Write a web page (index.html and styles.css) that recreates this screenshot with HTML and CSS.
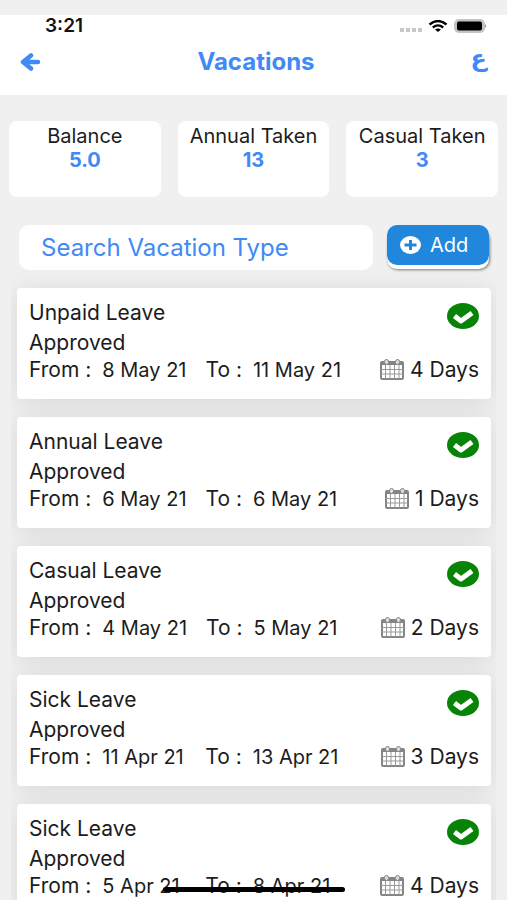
FILE: index.html
```html
<!DOCTYPE html>
<html lang="en">
  <head>
    <meta charset="UTF-8" />
    <meta name="viewport" content="width=device-width, initial-scale=1.0" />
    <title>Vacations</title>
    <link rel="stylesheet" href="styles.css">
  </head>
  <body>
    <!-- shared icons -->
    <svg class="sprite" aria-hidden="true">
      <symbol id="check" viewBox="0 0 32 26" preserveAspectRatio="none">
        <ellipse cx="16" cy="13" rx="16" ry="13" fill="#078307" />
        <path d="M7.500 13L14 18L25 10" fill="none" stroke="#fff" stroke-width="5" stroke-linejoin="round" />
      </symbol>
      <symbol id="calendar" viewBox="0 0 24 22">
        <rect x="1" y="3" width="22" height="17" rx="1" fill="#fff" stroke="#858585" stroke-width="2" />
        <path d="M1 2.500h22V6H1z" fill="#858585" />
        <path d="M1 10.500h22M1 15h22M5.500 6v14M10 6v14M14.500 6v14M19 6v14" stroke="#999" stroke-width="1" />
        <rect x="4.500" y="0.500" width="4" height="5" rx="2" fill="#ddd" stroke="#858585" />
        <rect x="15.500" y="0.500" width="4" height="5" rx="2" fill="#ddd" stroke="#858585" />
      </symbol>
    </svg>

    <div class="app">
      <header class="header">
        <div class="status">
          <span class="time">3:21</span>
          <svg class="signal" viewBox="0 0 24 4" width="24" height="4"><path d="M0 0h4v4H0zM6 0h4v4H6zM12 0h4v4h-4zM18 0h4v4h-4z" fill="#c8c8c8" /></svg>
          <svg class="wifi" viewBox="0 0 20 12" width="20" height="12">
            <path d="M1.500 4.500Q10 -2.500 18.500 4.500M4.800 7.500Q10 3.200 15.200 7.500" fill="none" stroke="#000" stroke-width="2.300" />
            <path d="M7 9.600Q10 7.400 13 9.600L10 12z" />
          </svg>
          <svg class="battery" viewBox="0 0 33 14" width="33" height="14">
            <rect x="1" y="1" width="29" height="12" rx="4" fill="#c4c4c4" stroke="#c4c4c4" stroke-width="2" />
            <rect x="3" y="2.500" width="25" height="9" rx="2" />
            <path d="M31 5q2 2 0 4z" fill="#888" />
          </svg>
        </div>
        <nav class="nav">
          <a class="back" href="#" aria-label="Back">
            <svg viewBox="0 0 21 18" width="21" height="18"><path d="M11 2.500L3 9l8 6.500M3.500 9H18" fill="none" stroke="#4189f5" stroke-width="4.500" stroke-linecap="round" stroke-linejoin="round" /></svg>
          </a>
          <h1>Vacations</h1>
          <a class="lang" href="#" lang="ar">ع</a>
        </nav>
      </header>

      <section class="stats">
        <div class="stat">Balance<strong>5.0</strong></div>
        <div class="stat">Annual Taken<strong>13</strong></div>
        <div class="stat">Casual Taken<strong>3</strong></div>
      </section>

      <form class="search">
        <input type="text" placeholder="Search Vacation Type" aria-label="Search Vacation Type" />
        <button type="button">
          <svg viewBox="0 0 21 18" width="21" height="18"><ellipse cx="10.500" cy="9" rx="10.500" ry="9" fill="#fff" /><path d="M10.500 4v10M4.500 9h12" stroke="#2087dc" stroke-width="3" /></svg>
          Add
        </button>
      </form>

      <main class="list">
        <article class="card">
          <div class="top">
            <h2>Unpaid Leave</h2>
            <svg class="check"><use href="#check" /></svg>
          </div>
          <p class="state">Approved</p>
          <div class="dates">
            <span>From :</span><time>8 May 21</time>
            <span class="to">To :</span><time>11 May 21</time>
            <span class="days"><svg class="calendar"><use href="#calendar" /></svg>4 Days</span>
          </div>
        </article>

        <article class="card">
          <div class="top">
            <h2>Annual Leave</h2>
            <svg class="check"><use href="#check" /></svg>
          </div>
          <p class="state">Approved</p>
          <div class="dates">
            <span>From :</span><time>6 May 21</time>
            <span class="to">To :</span><time>6 May 21</time>
            <span class="days"><svg class="calendar"><use href="#calendar" /></svg>1 Days</span>
          </div>
        </article>

        <article class="card">
          <div class="top">
            <h2>Casual Leave</h2>
            <svg class="check"><use href="#check" /></svg>
          </div>
          <p class="state">Approved</p>
          <div class="dates">
            <span>From :</span><time>4 May 21</time>
            <span class="to">To :</span><time>5 May 21</time>
            <span class="days"><svg class="calendar"><use href="#calendar" /></svg>2 Days</span>
          </div>
        </article>

        <article class="card">
          <div class="top">
            <h2>Sick Leave</h2>
            <svg class="check"><use href="#check" /></svg>
          </div>
          <p class="state">Approved</p>
          <div class="dates">
            <span>From :</span><time>11 Apr 21</time>
            <span class="to">To :</span><time>13 Apr 21</time>
            <span class="days"><svg class="calendar"><use href="#calendar" /></svg>3 Days</span>
          </div>
        </article>

        <article class="card">
          <div class="top">
            <h2>Sick Leave</h2>
            <svg class="check"><use href="#check" /></svg>
          </div>
          <p class="state">Approved</p>
          <div class="dates">
            <span>From :</span><time>5 Apr 21</time>
            <span class="to">To :</span><time>8 Apr 21</time>
            <span class="days"><svg class="calendar"><use href="#calendar" /></svg>4 Days</span>
          </div>
        </article>
      </main>
    </div>

    <div class="home-bar"></div>
  </body>
</html>
```
FILE: styles.css
```css
* {
  box-sizing: border-box;
}

body {
  margin: 0;
  background: #f0f0f0;
  color: #1c1c1c;
  font-family: Inter, "Liberation Sans", sans-serif;
  font-size: 20px;
  line-height: 24px;
}

h1, h2, p {
  margin: 0;
}

a {
  color: #4189f5;
  text-decoration: none;
}

.sprite {
  position: absolute;
  width: 0;
  height: 0;
}

.app {
  height: 100vh;
  padding-top: 15px;
  overflow: hidden;
}

.header {
  height: 80px;
  background: #fff;
}

.status {
  display: flex;
  align-items: center;
  height: 22px;
  padding: 0 20px 0 45px;
}

.time {
  flex: 1;
  color: #111;
  font-size: 19px;
  font-weight: 600;
}

.signal {
  align-self: flex-end;
  margin-bottom: 5px;
}

.wifi {
  margin: 0 6px 0 4px;
}

.nav {
  display: grid;
  grid-template-columns: 40px 1fr 40px;
  align-items: center;
  height: 50px;
  padding: 0 20px;
}

.nav h1 {
  padding-left: 5px;
  color: #4189f5;
  font-size: 24px;
  font-weight: 700;
  text-align: center;
}

.back {
  display: flex;
}

.lang {
  align-self: start;
  font-family: "DejaVu Sans", sans-serif;
  font-size: 24px;
  font-weight: 700;
  line-height: 42px;
  text-align: right;
}

/* balance boxes */
.stats {
  display: grid;
  grid-template-columns: repeat(3, 1fr);
  gap: 17px;
  padding: 26px 9px 0;
}

.stat {
  height: 76px;
  padding-top: 3px;
  border-radius: 8px;
  background: #fff;
  text-align: center;
  white-space: nowrap;
}

.stat strong {
  display: block;
  color: #4189f5;
}

/* search */
.search {
  display: flex;
  align-items: flex-start;
  gap: 14px;
  padding: 28px 18px 0 19px;
}

.search input {
  flex: 1;
  min-width: 0;
  height: 45px;
  padding: 0 22px;
  border: 0;
  border-radius: 10px;
  background: #fff;
  color: #4189f5;
  font-family: inherit;
  font-size: 24px;
}

.search input::placeholder {
  color: #4189f5;
  opacity: 1;
}

.search button {
  display: flex;
  align-items: center;
  gap: 9px;
  width: 102px;
  height: 40px;
  padding: 0 13px;
  border: 0;
  border-radius: 10px;
  background: #2087dc;
  box-shadow: 0 4px 0 #fff, 1px 5px 3px #777;
  color: #fff;
  font-family: inherit;
  font-size: 20px;
}

/* vacations */
.list {
  display: flex;
  flex-direction: column;
  gap: 18px;
  margin: 0 11px;
  padding: 18px 5px 40px 6px;
  overflow: hidden;
}

.card {
  flex: none;
  height: 111px;
  padding: 10px 12px;
  border-radius: 4px;
  background: #fff;
  box-shadow: 0 3px 24px rgba(0, 0, 0, 0.1);
}

.top {
  display: flex;
  justify-content: space-between;
  height: 30px;
}

.top h2 {
  font-size: 21px;
  font-weight: 400;
  line-height: 30px;
}

.check {
  width: 32px;
  height: 26px;
  margin-top: 5px;
}

.state {
  font-size: 21px;
  line-height: 30px;
}

.dates {
  display: flex;
  align-items: center;
  gap: 11px;
  font-size: 21px;
  white-space: nowrap;
}

.dates time {
  min-width: 84px;
  font-size: 20px;
}

.to {
  margin-left: 8px;
}

.days {
  display: flex;
  align-items: center;
  gap: 6px;
  margin-left: auto;
}

.calendar {
  width: 24px;
  height: 22px;
}

.home-bar {
  position: fixed;
  bottom: 8px;
  left: 50%;
  width: 182px;
  height: 5px;
  border-radius: 3px;
  background: #000;
  transform: translateX(-50%);
}
```
